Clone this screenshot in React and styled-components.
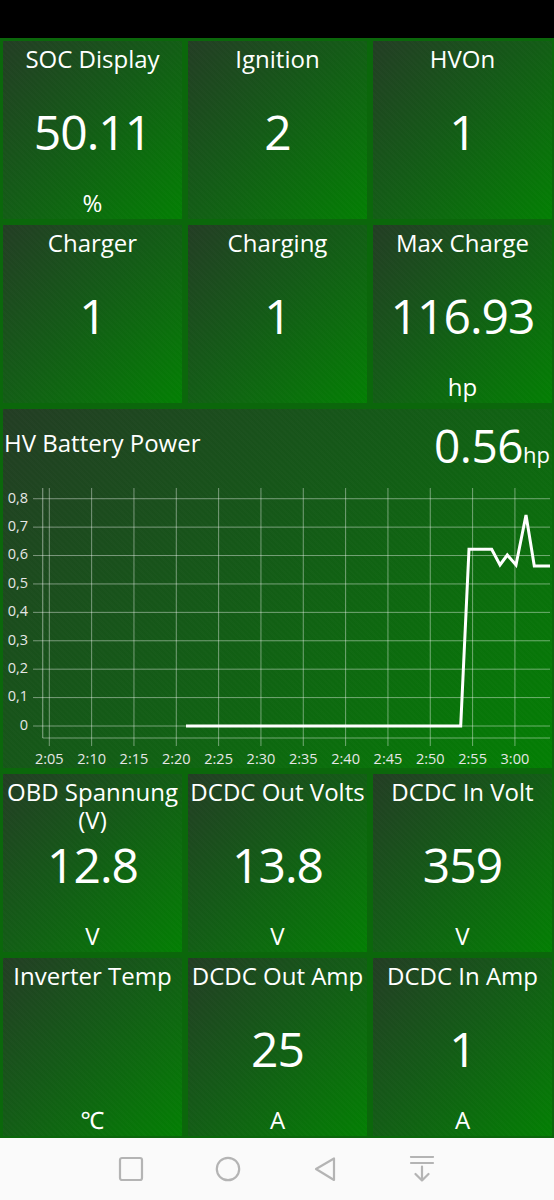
import React from 'react';
import styled, {createGlobalStyle} from 'styled-components';

const GlobalStyle = createGlobalStyle`
  html, body {
    margin: 0;
    padding: 0;
    background: #fafafa;
  }
  body {
    font-family: "Open Sans", "Noto Sans", sans-serif;
    font-weight: 400;
  }
`;

const Screen = styled.div`
  width: 554px;
  height: 1200px;
  display: flex;
  flex-direction: column;
  overflow: hidden;
`;

const StatusBar = styled.div`
  height: 38px;
  background: #000;
  flex-shrink: 0;
`;

const Board = styled.div`
  display: grid;
  grid-template-columns: repeat(3, 1fr);
  grid-template-rows: 178px 178px 359px 178px 178px;
  gap: 6px;
  padding: 3px 2px 2px 3px;
  background: #0b670b;
`;

const Panel = styled.div`
  background:
    repeating-linear-gradient(45deg, rgba(255,255,255,0.012) 0 2px, transparent 2px 4px),
    linear-gradient(135deg, #233d24 0%, #145a17 45%, #037f03 100%);
  color: #fff;
  overflow: hidden;
`;

const Tile = styled(Panel)`
  display: grid;
  grid-template-rows: 1fr auto 1fr;
  text-align: center;
`;

const Title = styled.div`
  align-self: start;
  padding-top: 4px;
  font-size: 24px;
  line-height: 28px;
`;

const Value = styled.div`
  font-size: 48px;
  line-height: 48px;
  letter-spacing: -1px;
  padding-top: 4px;
  min-height: 48px;
`;

const Unit = styled.div`
  align-self: end;
  padding-bottom: 2px;
  font-size: 24px;
  line-height: 28px;
`;

const ChartTile = styled(Panel)`
  grid-column: 1 / span 3;
  display: flex;
  flex-direction: column;
`;

const ChartHeader = styled.div`
  height: 70px;
  display: flex;
  justify-content: space-between;
  align-items: flex-start;
  padding: 0 2px 0 1px;
`;

const ChartTitle = styled.div`
  margin-top: 18px;
  font-size: 24px;
  line-height: 32px;
`;

const ChartValue = styled.div`
  margin-top: 13px;
  font-size: 46px;
  line-height: 46px;
  letter-spacing: -0.5px;

  span {
    font-size: 22px;
    letter-spacing: 0;
  }
`;

const Plot = styled.svg`
  display: block;
  font-family: "Open Sans", "Noto Sans", sans-serif;
`;

const NavBar = styled.div`
  flex: 1;
  background: #fafafa;
  display: flex;
  justify-content: center;
  align-items: center;
  gap: 71px;
  padding-right: 1px;
`;

const NavIcon = styled.svg`
  width: 26px;
  height: 26px;
  fill: none;
  stroke: #b4b4b4;
  stroke-width: 2.2;
  stroke-linejoin: round;
  stroke-linecap: round;
`;

const tiles = [
    {title: 'SOC Display', value: '50.11', unit: '%'},
    {title: 'Ignition', value: '2'},
    {title: 'HVOn', value: '1'},
    {title: 'Charger', value: '1'},
    {title: 'Charging', value: '1'},
    {title: 'Max Charge', value: '116.93', unit: 'hp'},
];

const moreTiles = [
    {title: 'OBD Spannung (V)', value: '12.8', unit: 'V'},
    {title: 'DCDC Out Volts', value: '13.8', unit: 'V'},
    {title: 'DCDC In Volt', value: '359', unit: 'V'},
    {title: 'Inverter Temp', value: '', unit: '℃'},
    {title: 'DCDC Out Amp', value: '25', unit: 'A'},
    {title: 'DCDC In Amp', value: '1', unit: 'A'},
];

// chart geometry, in px inside the svg
const LEFT = 39.7;
const RIGHT = 547;
const TOP = 9;
const AXIS_Y = 259;
const zeroY = 247;
const perUnit = 284.1;
const yTicks = [0.8, 0.7, 0.6, 0.5, 0.4, 0.3, 0.2, 0.1, 0];
const xTicks = ['2:05', '2:10', '2:15', '2:20', '2:25', '2:30', '2:35', '2:40', '2:45', '2:50', '2:55', '3:00'];
const xAt = i => 46.3 + i * 42.33;

const series = [
    [183, 247], [457.7, 247], [466, 70.3], [488.7, 70.3], [497, 86], [504.3, 76],
    [513, 86], [523, 36], [531.3, 87], [547, 87]
];

const gridColor = 'rgba(255,255,255,0.42)';

function BatteryChart() {
    return (
        <Plot width="548" height="289" viewBox="0 0 548 289">
            {yTicks.map(v => {
                const y = zeroY - v * perUnit;
                return (
                    <g key={v}>
                        <line x1={30} x2={RIGHT} y1={y} y2={y} stroke={gridColor} strokeWidth="1"/>
                        <text x={25} y={y} fill="#e6e6e6" fontSize="14.5" textAnchor="end" dominantBaseline="middle">
                            {v === 0 ? '0' : v.toFixed(1).replace('.', ',')}
                        </text>
                    </g>
                );
            })}
            {xTicks.map((t, i) => (
                <g key={t}>
                    <line x1={xAt(i)} x2={xAt(i)} y1={TOP} y2={267} stroke={gridColor} strokeWidth="1"/>
                    <text x={xAt(i)} y={285} fill="#e6e6e6" fontSize="14.5" textAnchor="middle">{t}</text>
                </g>
            ))}
            <line x1={LEFT} x2={LEFT} y1={TOP} y2={AXIS_Y} stroke={gridColor} strokeWidth="1.2"/>
            <line x1={LEFT} x2={RIGHT} y1={AXIS_Y} y2={AXIS_Y} stroke={gridColor} strokeWidth="1.2"/>
            <polyline
                points={series.map(p => p.join(',')).join(' ')}
                fill="none" stroke="#fff" strokeWidth="3" strokeLinejoin="miter"/>
        </Plot>
    );
}

const renderTile = ({title, value, unit}) => (
    <Tile key={title}>
        <Title>{title}</Title>
        <Value>{value}</Value>
        <Unit>{unit}</Unit>
    </Tile>
);

export default function App() {
    return (
        <Screen>
            <GlobalStyle/>
            <StatusBar/>
            <Board>
                {tiles.map(renderTile)}
                <ChartTile>
                    <ChartHeader>
                        <ChartTitle>HV Battery Power</ChartTitle>
                        <ChartValue>0.56<span>hp</span></ChartValue>
                    </ChartHeader>
                    <BatteryChart/>
                </ChartTile>
                {moreTiles.map(renderTile)}
            </Board>
            <NavBar>
                <NavIcon viewBox="0 0 26 26">
                    <rect x="2" y="2" width="22" height="22" rx="2"/>
                </NavIcon>
                <NavIcon viewBox="0 0 26 26">
                    <circle cx="13" cy="13" r="11.2"/>
                </NavIcon>
                <NavIcon viewBox="0 0 26 26">
                    <path d="M4 13 L22 2.5 L22 24 Z"/>
                </NavIcon>
                <NavIcon viewBox="0 0 26 26">
                    <path d="M2 1 H24 M2 7 H24 M13 10.5 V24.5 M6.5 18 L13 24.5 L19.5 18"/>
                </NavIcon>
            </NavBar>
        </Screen>
    );
}
